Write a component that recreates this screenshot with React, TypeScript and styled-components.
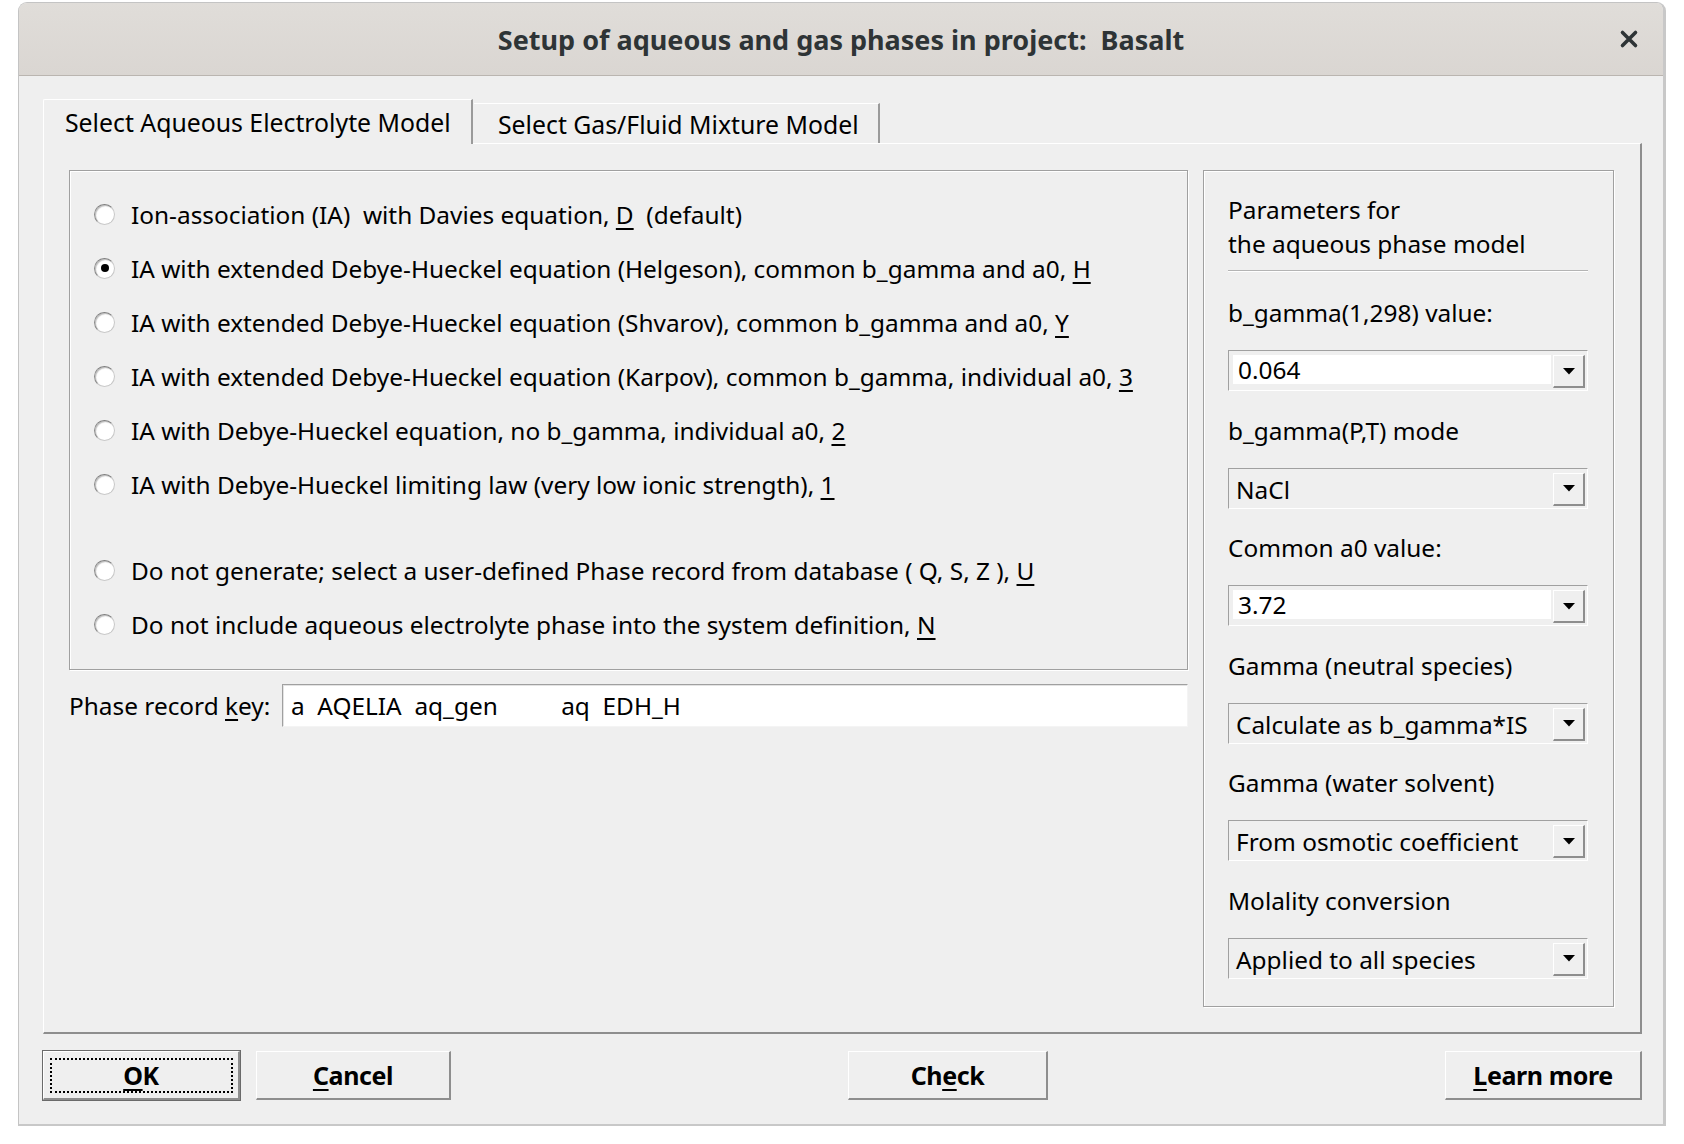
import React from "react";
import styled, { createGlobalStyle, css } from "styled-components";

const Global = createGlobalStyle`
  html, body { margin: 0; padding: 0; background: #ffffff; }
  body { font-family: "Noto Sans", "Open Sans", sans-serif; color: #000; }
`;

const Page = styled.div`
  padding: 2px 0 0 18px;
  width: 1684px;
  height: 1144px;
  box-sizing: border-box;
`;

const Window = styled.div`
  width: 1648px;
  height: 1124px;
  box-sizing: border-box;
  background: #efefef;
  border: 1px solid #c4c4c4;
  border-right: 3px solid #c8c8c8;
  border-bottom: 2px solid #c8c8c8;
  border-radius: 9px 9px 0 0;
  display: flex;
  flex-direction: column;
  overflow: hidden;
`;

const TitleBar = styled.div`
  height: 72px;
  flex: none;
  background: linear-gradient(#e0ddd9, #dad6d2);
  border-bottom: 1px solid #bab5b0;
  display: flex;
  align-items: center;
  justify-content: center;
  position: relative;
`;

const Title = styled.div`
  font-family: "Noto Sans", sans-serif;
  font-weight: 700;
  font-size: 27px;
  color: #2e3436;
  white-space: pre;
`;

const CloseButton = styled.div`
  position: absolute;
  right: 24px;
  top: 26px;
  width: 20px;
  height: 20px;
  display: flex;
`;

const Body = styled.div`
  flex: 1;
  display: flex;
  flex-direction: column;
  padding: 23px 21px 0 24px;
`;

const TabBar = styled.div`
  display: flex;
  align-items: flex-end;
  height: 44px;
  position: relative;
  z-index: 1;
`;

const Tab = styled.div<{ $active?: boolean }>`
  box-sizing: border-box;
  display: flex;
  align-items: center;
  font-size: 24.8px;
  background: #efefef;
  border-top: 1px solid #ffffff;
  border-right: 2px solid #9a9a9a;
  white-space: nowrap;
  ${(p) =>
    p.$active
      ? css`
          width: 430px;
          height: 45px;
          margin-bottom: -1px;
          padding: 0 0 0 21px;
          border-left: 1px solid #ffffff;
          border-top-left-radius: 2px;
        `
      : css`
          width: 406px;
          height: 40px;
          padding: 1px 0 0 24px;
          margin-left: 1px;
        `}
`;

const TabPane = styled.div`
  box-sizing: border-box;
  height: 891px;
  border-top: 1px solid #ffffff;
  border-left: 1px solid #ffffff;
  border-right: 2px solid #8e8e8e;
  border-bottom: 2px solid #8e8e8e;
  padding: 26px 26px 25px 25px;
  display: flex;
  gap: 15px;
`;

const LeftColumn = styled.div`
  width: 1119px;
  display: flex;
  flex-direction: column;
  gap: 14px;
`;

const etched = css`
  border: 1px solid #a0a0a0;
  box-shadow: inset 1px 1px 0 #ffffff, 1px 1px 0 #ffffff;
`;

const GroupBox = styled.div`
  box-sizing: border-box;
  ${etched};
  height: 500px;
  padding: 16px 0 0 24px;
  display: flex;
  flex-direction: column;
`;

const RadioRow = styled.div`
  height: 54px;
  display: flex;
  align-items: center;
  gap: 16px;
  font-size: 24.4px;
  white-space: pre;
`;

const Spacer = styled.div<{ $h: number }>`
  height: ${(p) => p.$h}px;
  flex: none;
`;

const RadioCircle = styled.span<{ $checked?: boolean }>`
  position: relative;
  box-sizing: border-box;
  width: 21px;
  height: 21px;
  flex: none;
  border-radius: 50%;
  background: radial-gradient(circle at 60% 60%, #ffffff 55%, #f0f0f0 100%);
  border: 1px solid #c8c8c8;
  border-top-color: #7d7d7d;
  border-left-color: #8a8a8a;
  box-shadow: inset 1px 1px 1px #bdbdbd;
  ${(p) =>
    p.$checked &&
    css`
      &::after {
        content: "";
        position: absolute;
        left: 5.5px;
        top: 5.5px;
        width: 8px;
        height: 8px;
        border-radius: 50%;
        background: #000;
      }
    `}
`;

const U = styled.span`
  text-decoration: underline;
  text-underline-offset: 4px;
  text-decoration-thickness: 1.5px;
`;

const KeyRow = styled.div`
  display: flex;
  align-items: center;
  height: 43px;
  gap: 12px;
`;

const KeyLabel = styled.label`
  font-size: 24.4px;
  white-space: pre;
  width: 201px;
  flex: none;
`;

const KeyInput = styled.div`
  box-sizing: border-box;
  flex: 1;
  height: 43px;
  background: #ffffff;
  border: 1px solid #a0a0a0;
  border-right-color: #f4f4f4;
  border-bottom-color: #f4f4f4;
  box-shadow: inset 1px 1px 0 #e3e3e3;
  padding: 0 0 0 8px;
  display: flex;
  align-items: center;
  font-size: 24.4px;
  white-space: pre;
`;

const ParamBox = styled.div`
  box-sizing: border-box;
  ${etched};
  width: 411px;
  padding: 22px 25px 0 24px;
  display: flex;
  flex-direction: column;
`;

const ParamHeader = styled.div`
  font-size: 24.4px;
  line-height: 34px;
  padding-bottom: 9px;
  border-bottom: 1px solid #b4b4b4;
  box-shadow: 0 1px 0 #ffffff;
  margin-bottom: 25px;
`;

const ParamLabel = styled.div`
  font-size: 24.4px;
  line-height: 34px;
  height: 34px;
  white-space: pre;
  margin-bottom: 20px;
`;

const ParamField = styled.div`
  display: flex;
  flex-direction: column;
  margin-bottom: 22.6px;
`;

const Combo = styled.div`
  box-sizing: border-box;
  height: 41px;
  border: 1px solid #a0a0a0;
  border-right-color: #ffffff;
  border-bottom-color: #ffffff;
  padding: 4px 2px 2px 4px;
  display: flex;
  align-items: stretch;
  gap: 2px;
`;

const ComboText = styled.div<{ $editable?: boolean }>`
  flex: 1;
  display: flex;
  align-items: center;
  font-size: 24.4px;
  white-space: pre;
  padding-left: ${(p) => (p.$editable ? "5px" : "3px")};
  background: ${(p) => (p.$editable ? "#ffffff" : "transparent")};
  margin-bottom: ${(p) => (p.$editable ? "4px" : "0")};
`;

const ComboButton = styled.div`
  box-sizing: border-box;
  width: 32px;
  flex: none;
  background: #efefef;
  border-top: 1px solid #ffffff;
  border-left: 1px solid #ffffff;
  border-right: 2px solid #8e8e8e;
  border-bottom: 2px solid #8e8e8e;
  display: flex;
  align-items: center;
  justify-content: center;
`;

const ButtonRow = styled.div`
  display: flex;
  align-items: center;
  margin-top: 16px;
  height: 50px;
`;

const Stretch = styled.div<{ $fixed?: number }>`
  flex: ${(p) => (p.$fixed ? `0 0 ${p.$fixed}px` : "1")};
`;

const Button = styled.div<{ $w: number; $default?: boolean }>`
  box-sizing: border-box;
  width: ${(p) => p.$w}px;
  height: 49px;
  background: #efefef;
  border-top: 1px solid #ffffff;
  border-left: 1px solid #ffffff;
  border-right: 2px solid #8e8e8e;
  border-bottom: 2px solid #8e8e8e;
  display: flex;
  align-items: center;
  justify-content: center;
  font-family: "Noto Sans", sans-serif;
  font-weight: 700;
  font-size: 25px;
  letter-spacing: -0.4px;
  position: relative;
  ${(p) =>
    p.$default &&
    css`
      outline: 1px solid #6a6a6a;
      &::after {
        content: "";
        position: absolute;
        inset: 6px 5px 5px 6px;
        border: 2px dotted #000;
      }
    `}
`;

const Arrow = () => (
  <svg width="12" height="7" viewBox="0 0 12 7">
    <polygon points="0,0 12,0 6,6.5" fill="#000" />
  </svg>
);

const CloseIcon = () => (
  <svg width="20" height="20" viewBox="0 0 20 20">
    <path d="M3.5 3.5 L16.5 16.5 M16.5 3.5 L3.5 16.5" stroke="#2e3436" strokeWidth="3.6" strokeLinecap="round" />
  </svg>
);

const radios: { text: React.ReactNode; checked?: boolean }[] = [
  { text: <>Ion-association (IA)  with Davies equation, <U>D</U>  (default)</> },
  { text: <>IA with extended Debye-Hueckel equation (Helgeson), common b_gamma and a0, <U>H</U></>, checked: true },
  { text: <>IA with extended Debye-Hueckel equation (Shvarov), common b_gamma and a0, <U>Y</U></> },
  { text: <>IA with extended Debye-Hueckel equation (Karpov), common b_gamma, individual a0, <U>3</U></> },
  { text: <>IA with Debye-Hueckel equation, no b_gamma, individual a0, <U>2</U></> },
  { text: <>IA with Debye-Hueckel limiting law (very low ionic strength), <U>1</U></> },
];

const radios2: { text: React.ReactNode }[] = [
  { text: <>Do not generate; select a user-defined Phase record from database ( Q, S, Z ), <U>U</U></> },
  { text: <>Do not include aqueous electrolyte phase into the system definition, <U>N</U></> },
];

const params = [
  { label: "b_gamma(1,298) value:", value: "0.064", editable: true },
  { label: "b_gamma(P,T) mode", value: "NaCl" },
  { label: "Common a0 value:", value: "3.72", editable: true },
  { label: "Gamma (neutral species)", value: "Calculate as b_gamma*IS" },
  { label: "Gamma (water solvent)", value: "From osmotic coefficient" },
  { label: "Molality conversion", value: "Applied to all species" },
];

export default function App() {
  return (
    <>
      <Global />
      <Page>
        <Window>
          <TitleBar>
            <Title>Setup of aqueous and gas phases in project:  Basalt</Title>
            <CloseButton>
              <CloseIcon />
            </CloseButton>
          </TitleBar>
          <Body>
            <TabBar>
              <Tab $active>Select Aqueous Electrolyte Model</Tab>
              <Tab>Select Gas/Fluid Mixture Model</Tab>
            </TabBar>
            <TabPane>
              <LeftColumn>
                <GroupBox>
                  {radios.map((r, i) => (
                    <RadioRow key={i}>
                      <RadioCircle $checked={r.checked} />
                      <span>{r.text}</span>
                    </RadioRow>
                  ))}
                  <Spacer $h={32} />
                  {radios2.map((r, i) => (
                    <RadioRow key={i}>
                      <RadioCircle />
                      <span>{r.text}</span>
                    </RadioRow>
                  ))}
                </GroupBox>
                <KeyRow>
                  <KeyLabel>
                    Phase record <U>k</U>ey:
                  </KeyLabel>
                  <KeyInput>{"a  AQELIA  aq_gen          aq  EDH_H"}</KeyInput>
                </KeyRow>
              </LeftColumn>
              <ParamBox>
                <ParamHeader>
                  Parameters for
                  <br />
                  the aqueous phase model
                </ParamHeader>
                {params.map((p) => (
                  <ParamField key={p.label}>
                    <ParamLabel>{p.label}</ParamLabel>
                    <Combo>
                      <ComboText $editable={p.editable}>{p.value}</ComboText>
                      <ComboButton>
                        <Arrow />
                      </ComboButton>
                    </Combo>
                  </ParamField>
                ))}
              </ParamBox>
            </TabPane>
            <ButtonRow>
              <Button $w={197} $default>
                <U>O</U>K
              </Button>
              <Stretch $fixed={16} />
              <Button $w={195}>
                <U>C</U>ancel
              </Button>
              <Stretch />
              <Button $w={200}>
                Ch<U>e</U>ck
              </Button>
              <Stretch />
              <Button $w={197}>
                <U>L</U>earn more
              </Button>
            </ButtonRow>
          </Body>
        </Window>
      </Page>
    </>
  );
}
